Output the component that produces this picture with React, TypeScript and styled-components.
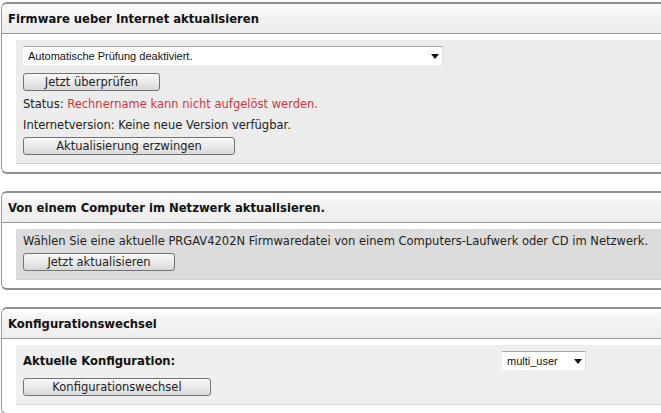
import React from 'react';
import styled, { createGlobalStyle } from 'styled-components';

const GlobalStyle = createGlobalStyle`
  html, body {
    margin: 0;
    padding: 0;
    overflow: hidden;
    background: #fff;
  }
  body {
    font-family: Verdana, "DejaVu Sans", sans-serif;
    font-size: 11.5px;
    color: #222;
  }
`;

const Page = styled.div`
  width: 740px;
  padding: 2px 0 0 1px;
  display: flex;
  flex-direction: column;
  gap: 17px;
`;

const Panel = styled.div`
  border: 1px solid #9a9a9a;
  border-top: 2px solid #8e8e8e;
  border-bottom: 2px solid #8e8e8e;
  border-radius: 6px;
  background: #fff;
  overflow: hidden;
`;

const PanelHeader = styled.div`
  height: 29px;
  display: flex;
  align-items: center;
  padding-left: 6px;
  font-weight: bold;
  font-size: 11.6px;
  color: #111;
  background: linear-gradient(#ffffff 0%, #f3f3f3 35%, #eeeeee 100%);
  border-bottom: 1px solid #9a9a9a;
`;

const PanelBody = styled.div`
  padding: 6px 0 8px 14px;
`;

interface InnerProps {
  $bg: string;
  $top: number;
}

const InnerBox = styled.div<InnerProps>`
  background: ${(p) => p.$bg};
  border-bottom: 1px solid #d2d2d2;
  padding: ${(p) => p.$top}px 7px 8px 7px;
  display: flex;
  flex-direction: column;
  align-items: flex-start;
`;

interface SelectProps {
  $width: number;
}

const FakeSelect = styled.div<SelectProps>`
  width: ${(p) => p.$width}px;
  height: 19px;
  box-sizing: border-box;
  background: #fff;
  border-top: 1px solid #a8a8a8;
  border-right: 1px solid #e0e0e0;
  display: flex;
  align-items: center;
  justify-content: space-between;
  padding: 0 3px 0 5px;
  font-family: "Liberation Sans", Arial, sans-serif;
  font-size: 11px;
  color: #111;
`;

const Arrow = () => (
  <svg width="8" height="5" viewBox="0 0 8 5">
    <path d="M0 0 L8 0 L4 5 Z" fill="#111" />
  </svg>
);

interface ButtonProps {
  $width: number;
  $top?: number;
}

const Button = styled.button<ButtonProps>`
  width: ${(p) => p.$width}px;
  height: 18px;
  box-sizing: border-box;
  padding: 0;
  margin: ${(p) => p.$top ?? 0}px 0 0 0;
  border: 1px solid #737373;
  border-radius: 3px;
  background: linear-gradient(#f7f7f7 0%, #ececec 45%, #d8d8d8 100%);
  font-family: Verdana, "DejaVu Sans", sans-serif;
  font-size: 11.5px;
  color: #222;
  line-height: 16px;
`;

const TextLine = styled.div`
  line-height: 21px;
  white-space: nowrap;
`;

const ErrorText = styled.span`
  color: #d8343c;
`;

const StatusBlock = styled.div`
  margin: 3px 0 1px 0;
`;

const ConfigRow = styled.div`
  display: grid;
  grid-template-columns: 479px auto;
  align-items: center;
  margin-bottom: 8px;
`;

const Label = styled.div`
  font-weight: bold;
  font-size: 11.6px;
  color: #111;
`;

function App() {
  return (
    <>
      <GlobalStyle />
      <Page>
        <Panel>
          <PanelHeader>Firmware ueber Internet aktualisieren</PanelHeader>
          <PanelBody>
            <InnerBox $bg="#ececec" $top={6}>
              <FakeSelect $width={420}>
                <span>Automatische Prüfung deaktiviert.</span>
                <Arrow />
              </FakeSelect>
              <Button $width={137} $top={8}>
                Jetzt überprüfen
              </Button>
              <StatusBlock>
                <TextLine>
                  Status: <ErrorText>Rechnername kann nicht aufgelöst werden.</ErrorText>
                </TextLine>
                <TextLine>Internetversion: Keine neue Version verfügbar.</TextLine>
              </StatusBlock>
              <Button $width={212}>Aktualisierung erzwingen</Button>
            </InnerBox>
          </PanelBody>
        </Panel>

        <Panel>
          <PanelHeader>Von einem Computer im Netzwerk aktualisieren.</PanelHeader>
          <PanelBody>
            <InnerBox $bg="#dcdcdc" $top={2}>
              <TextLine>
                Wählen Sie eine aktuelle PRGAV4202N Firmwaredatei von einem Computers-Laufwerk oder CD im Netzwerk.
              </TextLine>
              <Button $width={152} $top={1}>
                Jetzt aktualisieren
              </Button>
            </InnerBox>
          </PanelBody>
        </Panel>

        <Panel>
          <PanelHeader>Konfigurationswechsel</PanelHeader>
          <PanelBody>
            <InnerBox $bg="#efefef" $top={6}>
              <ConfigRow>
                <Label>Aktuelle Konfiguration:</Label>
                <FakeSelect $width={84}>
                  <span>multi_user</span>
                  <Arrow />
                </FakeSelect>
              </ConfigRow>
              <Button $width={188}>Konfigurationswechsel</Button>
            </InnerBox>
          </PanelBody>
        </Panel>
      </Page>
    </>
  );
}

export default App;
